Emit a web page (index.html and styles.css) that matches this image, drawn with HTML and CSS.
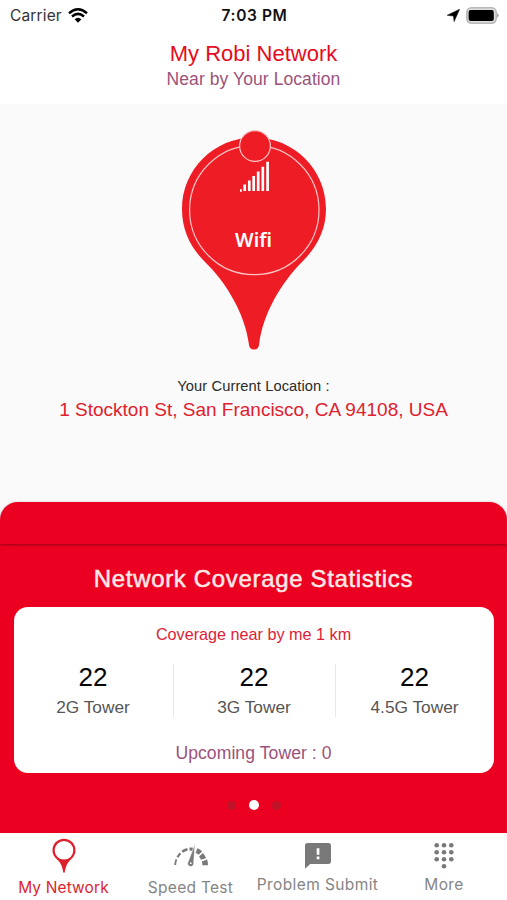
FILE: index.html
```html
<!DOCTYPE html>
<html lang="en">
<head>
<meta charset="utf-8">
<title>My Robi Network</title>
<link rel="stylesheet" href="styles.css">
</head>
<body>
<div class="status">
  <div class="status-left"><span class="carrier">Carrier</span>
    <svg class="wifi" width="20" height="15" viewBox="0 0 20 15" fill="none" stroke="#000" stroke-width="2.500"><path d="M1 5.200Q10-2.600 19 5.200M4 8.500Q10 3.300 16 8.500"/><path d="M6.600 11.200Q10 8.200 13.400 11.200L10 14.700Z" fill="#000" stroke="none"/></svg>
  </div>
  <span class="time">7:03 PM</span>
  <div class="status-right">
    <svg width="13" height="13" viewBox="0 0 13 13"><path d="M12.600.3 7.100 12.600 6.400 7 .2 6.300Z" stroke="#000" stroke-width=".5"/></svg>
    <svg width="33" height="17" viewBox="0 0 33 17"><rect x=".8" y=".8" width="29.400" height="15.400" rx="4.600" fill="#ddd" stroke="#b9b9b9" stroke-width="1.600"/><rect x="2.600" y="3" width="25.200" height="11" rx="2"/><path d="M31.200 6.300q1.500.8 1.500 2.200t-1.500 2.200Z" fill="#999"/></svg>
  </div>
</div>
<header class="header">
  <h1 class="title">My Robi Network</h1>
  <p class="subtitle">Near by Your Location</p>
</header>
<main class="location">
  <div class="pin">
    <svg width="146" height="220" viewBox="0 0 146 220"><path d="M73 7.500C33 7.500 1 39.500 1 79C1 101 10 118 24 132C45 152 64 184 67.800 213.500Q68 219.500 73 219.500T78.200 213.500C82 184 100 153 121 132C135 118 145 101 145 79C145 39.500 113 7.500 73 7.500Z" fill="#ee1d25"/><g fill="#ee1d25" stroke="#fbc4c6" stroke-width="1.200"><circle cx="73.300" cy="80" r="64.700"/><circle cx="74" cy="16" r="15.400"/></g><path d="M59 60.500h1.800M63.700 61v-6.500M68.300 61V50.500M72.700 61V46M77.200 61V41.500M81.800 61V36.700M86.600 61V31.800" fill="none" stroke="#fff" stroke-width="2.700"/></svg>
    <span class="pin-label">Wifi</span>
  </div>
  <p class="location-label">Your Current Location :</p>
  <p class="address">1 Stockton St, San Francisco, CA 94108, USA</p>
</main>
<section class="coverage">
  <div class="coverage-top"></div>
  <h2 class="coverage-title">Network Coverage Statistics</h2>
  <div class="card">
    <p class="near">Coverage near by me 1 km</p>
    <div class="towers">
      <div class="tower"><span class="count">22</span><span class="kind">2G Tower</span></div>
      <div class="tower"><span class="count">22</span><span class="kind">3G Tower</span></div>
      <div class="tower"><span class="count">22</span><span class="kind">4.5G Tower</span></div>
    </div>
    <p class="upcoming">Upcoming Tower : 0</p>
  </div>
  <div class="dots"><i class="dot"></i><i class="dot active"></i><i class="dot"></i></div>
</section>
<nav class="tabs">
  <div class="tab selected">
    <svg width="24" height="36" viewBox="0 0 24 36"><path fill-rule="evenodd" d="M12 .8C5.500.8.500 5.800.500 12.200c0 4.700 2.600 7.400 5.400 10 3 2.900 4.500 6.500 5.200 11.400q.3 1.300.9 1.300t.9-1.300c.7-4.900 2.200-8.500 5.200-11.400 2.800-2.600 5.400-5.300 5.400-10C23.500 5.800 18.500.8 12 .8Zm0 2.200a9.300 9.300 0 1 1 0 18.600a9.300 9.300 0 0 1 0-18.600Z" fill="#de1f2d"/></svg>
    <span class="tab-label">My Network</span>
  </div>
  <div class="tab speed">
    <svg width="36" height="36" viewBox="0 0 36 36" fill="none" stroke="#797979"><path d="M2.200 28q.1-3 1.200-5.600" stroke-width="1.800"/><path d="M4.500 20.200q1.200-2.100 3-3.900" stroke-width="2.200"/><path d="M9.200 14.800q2.300-1.800 5.300-2.500" stroke-width="2.700"/><path d="M16.500 12.200q1.700-.2 3.500.1" stroke-width="3.200"/><path d="M23.500 13.500q2.300 1 3.900 2.600" stroke-width="4.800"/><path d="M28 17.700q1.800 2.100 2.500 4.300" stroke-width="5.200"/><path d="M31.500 23.500q.7 2 .7 4.700" stroke-width="5.600"/><path d="M22 6.500 15.300 24.500a3.100 3.100 0 1 0 5.400 1.100Z" fill="#797979" stroke="#fff" stroke-width=".6"/><circle cx="17.800" cy="26.200" r=".9" fill="#fff" stroke="none"/></svg>
    <span class="tab-label">Speed Test</span>
  </div>
  <div class="tab raised">
    <svg width="28" height="28" viewBox="0 0 28 28"><path fill-rule="evenodd" d="M3.500 1h20.800Q27 1 27 3.700v15.500q0 2.700-2.700 2.700H6.200L1 26.700V3.700Q1 1 3.500 1ZM12.700 6.200v6.500h2.700V6.200Zm0 8.300v2.700h2.700v-2.700Z" fill="#797979"/></svg>
    <span class="tab-label">Problem Submit</span>
  </div>
  <div class="tab raised">
    <svg width="20" height="28" viewBox="0 0 20 28" fill="#797979"><circle cx="2.700" cy="3.200" r="2.300"/><circle cx="10" cy="3.200" r="2.300"/><circle cx="17.300" cy="3.200" r="2.300"/><circle cx="2.700" cy="10.300" r="2.300"/><circle cx="10" cy="10.300" r="2.300"/><circle cx="17.300" cy="10.300" r="2.300"/><circle cx="2.700" cy="17.300" r="2.300"/><circle cx="10" cy="17.300" r="2.300"/><circle cx="17.300" cy="17.300" r="2.300"/><circle cx="10" cy="24.300" r="2.300"/></svg>
    <span class="tab-label">More</span>
  </div>
</nav>
</body>
</html>
```

FILE: styles.css
```css
* { box-sizing: border-box; margin: 0; padding: 0; }
body { width: 507px; height: 900px; overflow: hidden; background: #fff; font-family: "Liberation Sans", Arial, sans-serif; text-align: center; display: flex; flex-direction: column; }
svg { display: block; flex: none; }
.status { height: 32px; flex: none; display: grid; grid-template-columns: 1fr auto 1fr; align-items: center; padding: 0 8px 2px 10px; font-family: Inter, sans-serif; }
.status-left, .status-right { display: flex; align-items: center; }
.status-left { gap: 6px; }
.status-right { justify-content: flex-end; gap: 6px; }
.carrier { font-size: 15.5px; color: #333; letter-spacing: .15px; }
.time { font-size: 15.5px; font-weight: 600; color: #111; letter-spacing: .6px; }
.header { height: 72px; flex: none; padding-top: 9px; }
.title { font-size: 22px; line-height: 26px; font-weight: 400; color: #e50b20; }
.subtitle { font-size: 17.5px; line-height: 24px; letter-spacing: .08px; color: #9c527c; }
.location { height: 398px; flex: none; background: #fafafa; padding-top: 26px; }
.pin { display: grid; justify-content: center; }
.pin > * { grid-area: 1 / 1; }
.pin-label { justify-self: center; margin-top: 95px; font: 600 19.5px/30px "Noto Sans", sans-serif; color: #fff; }
.location-label { margin-top: 25px; font-size: 14.7px; line-height: 22px; letter-spacing: .08px; color: #2b2b2b; }
.address { font-size: 19px; line-height: 26px; color: #e0202d; }
.coverage { height: 331px; flex: none; background: #fafafa linear-gradient(#ec0022, #ec0022) 0 24px no-repeat; padding-bottom: 1px; }
.coverage-top { height: 42px; background: #ec0022; border-radius: 18px 18px 0 0; box-shadow: 0 1px 3px rgba(80, 0, 10, .55); }
.coverage-title { padding-top: 21px; font-size: 24px; line-height: 28px; font-weight: 400; letter-spacing: .66px; color: #ffe9e5; -webkit-text-stroke: .5px #ffe9e5; }
.card { width: 480px; height: 166px; margin: 14px auto 0; padding-top: 15px; background: #fff; border-radius: 14px; }
.near { font-size: 16.2px; line-height: 24px; color: #dc2338; }
.towers { margin-top: 18px; height: 53px; display: grid; grid-template: 53px / 159px 162px 159px; }
.tower { display: flex; flex-direction: column; }
.tower + .tower { border-left: 1px solid #e7e7e7; }
.count { font-size: 26px; line-height: 26px; color: #050505; }
.kind { font-size: 17.3px; line-height: 34px; color: #555; }
.upcoming { margin-top: 24px; font-size: 17.6px; line-height: 24px; letter-spacing: .06px; color: #9c527c; }
.dots { display: flex; justify-content: center; align-items: center; gap: 13px; height: 12px; margin-top: 26px; }
.dot { width: 9px; height: 9px; border-radius: 50%; background: #bd1429; }
.active { width: 10px; height: 10px; background: #fff; }
.tabs { height: 67px; flex: none; display: grid; grid-template-columns: 127px 127px 127px 126px; font-family: Inter, sans-serif; color: #858585; }
.tab { display: flex; flex-direction: column; align-items: center; padding-top: 5px; }
.tab-label { font-size: 15.5px; line-height: 20px; margin-top: 4px; letter-spacing: .3px; white-space: nowrap; }
.speed { padding-top: 4px; }
.speed .tab-label { margin-top: 5px; }
.raised { padding-top: 9px; }
.raised .tab-label { margin-top: 5px; letter-spacing: .4px; }
.selected { color: #de1f2d; }
.selected .tab-label { letter-spacing: .12px; }
```
